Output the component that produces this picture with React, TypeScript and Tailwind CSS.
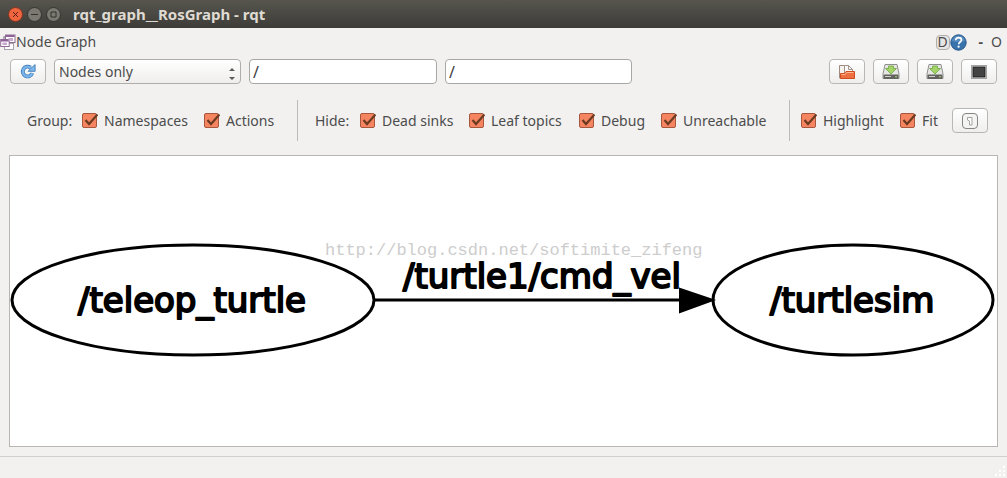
import type { ReactNode } from 'react';
import { useState } from 'react';

const toolButton =
  'flex h-[25px] w-9 shrink-0 items-center justify-center rounded border border-[#b9b7b4] bg-gradient-to-b from-white to-[#efeeed]';

const textInput =
  'h-[25px] min-w-0 rounded border border-[#a9a7a4] bg-white px-[3px] text-base text-[#3c3c3c] outline-none';

const RefreshIcon = () => (
  <svg className="size-4" viewBox="0 0 16 16" fill="none">
    <path d="M12.3 9.2A4.9 4.9 0 1 1 10.6 3.6" stroke="#3f7ab8" strokeWidth="3.8" />
    <path d="M8.2 7.3h6.9V.6l-2.4 2.1-1.6 1.4z" fill="#7db8ea" stroke="#3f7ab8" strokeWidth=".9" />
    <path d="M12.3 9.3A4.9 4.9 0 1 1 11 3.9" stroke="#79b5ea" strokeWidth="2.4" />
  </svg>
);

const FolderIcon = () => (
  <svg className="size-4" viewBox="0 0 16 16">
    <path d="M.5 1.500h5l1 1.500v11h-6z" fill="#f6f1ec" stroke="#a08b80" />
    <path d="M5.500 1.500h4l4 4v5h-8z" fill="#fbf9f7" stroke="#a3948b" />
    <path d="M9.500 1.500v4h4" fill="none" stroke="#a3948b" />
    <path d="M1.500 14.500v-5h4l1.500-2h8.500v7z" fill="#ee7040" stroke="#cf4c20" />
    <path d="M2.500 10.500h3.500l1.500-2h7" fill="none" stroke="#ffb896" />
  </svg>
);

const SaveIcon = () => (
  <svg className="h-4 w-[18px]" viewBox="0 0 18 16">
    <path d="M3 .5h12l2 9.500v4.500H1V10z" fill="#e6e6e4" stroke="#8f8f8f" />
    <rect x="1.500" y="10.500" width="15" height="4.500" rx="1" fill="#62625f" />
    <path d="M3 12.500h6" stroke="#cfcfcf" />
    <circle cx="14" cy="12.700" r=".8" fill="#b5e07f" />
    <path d="M6.500 2h5v2.500h3L9 10 3.500 4.500h3z" fill="#a4d468" stroke="#6fa843" strokeWidth=".8" />
  </svg>
);

const ScreenIcon = () => (
  <svg className="h-3.5 w-4" viewBox="0 0 16 14">
    <rect x=".5" y=".5" width="15" height="13" fill="#eee" stroke="#a3a3a3" />
    <rect x="2" y="2" width="12" height="10" fill="#434343" stroke="#222" />
  </svg>
);

const FitIcon = () => (
  <svg className="size-4" viewBox="0 0 16 16" fill="none">
    <rect x=".5" y=".5" width="15" height="15" rx="3.500" fill="#f4f4f3" stroke="#858585" />
    <path d="M5.500 4.500h4.500v7.500H7.500V8L5.500 7z" fill="#fff" stroke="#999" strokeWidth=".9" />
  </svg>
);

const NodeGraphIcon = () => (
  <svg className="size-4 shrink-0" viewBox="0 0 16 16">
    <path d="M4 8V3h4M12 8v5H9" fill="none" stroke="#9a949c" strokeWidth="1.500" />
    <g fill="#fff" stroke="#8d6c95">
      <rect x="4.500" y="9.500" width="9" height="6" stroke="#aaa3ad" />
      <rect x="5.500" y="1" width="9.500" height="7.500" />
      <rect x=".7" y="5.500" width="8.500" height="7" />
    </g>
    <path d="M6 2h8.500M1 6.500h8" stroke="#8f6399" strokeWidth="2" />
    <path d="M8.500 4h4.500v3H8.500zM2.500 8.500h4.500v2.500H2.500z" fill="#c9a9d0" />
  </svg>
);

const HelpIcon = () => (
  <svg className="size-[17px]" viewBox="0 0 17 17" fill="none">
    <circle cx="8.500" cy="8.500" r="7.700" fill="#3973ac" stroke="#245489" />
    <path d="M2 7a6.600 6.600 0 0 1 13 0Q8 9 2 7" fill="#6598c8" opacity=".6" />
    <path d="M5.700 6.200c0-3.500 5.800-3.200 5.800-.2 0 2-2.800 2-2.800 4.200" stroke="#fff" strokeWidth="1.700" />
    <circle cx="8.600" cy="12.700" r="1.100" fill="#fff" />
  </svg>
);

const windowButtons = [
  { name: 'Close', color: 'border-[#7d3520] bg-[#ee6540] text-[#5b1f0e]', path: 'M4 4l5 5M9 4l-5 5' },
  { name: 'Minimize', color: 'border-[#34332e] bg-[#7b7972] text-[#33322e]', path: 'M3 6.500h7' },
  { name: 'Maximize', color: 'border-[#34332e] bg-[#7b7972] text-[#33322e]', path: 'M4 4h5v5H4z' },
];

const TitleBar = () => (
  <header className="flex h-7 items-center gap-1 bg-gradient-to-b from-[#57554e] to-[#3d3c38] pl-2">
    {windowButtons.map(({ name, color, path }) => (
      <button
        key={name}
        aria-label={name}
        className={`flex size-[15px] items-center justify-center rounded-full border ${color}`}
      >
        <svg className="size-[13px] shrink-0" viewBox="0 0 13 13" fill="none" stroke="currentColor">
          <path d={path} />
        </svg>
      </button>
    ))}
    <h1 className="ml-2 text-[15px] font-bold text-[#dfdbd2]">rqt_graph__RosGraph - rqt</h1>
  </header>
);

const DockBar = () => (
  <div className="flex h-7 items-center">
    <NodeGraphIcon />
    <h2 className="text-sm">Node Graph</h2>
    <div className="ml-auto flex items-center text-sm">
      <button className="flex h-[15px] w-3.5 items-center justify-center rounded-sm border border-[#b0aeab] bg-[#e6e5e3]">
        D
      </button>
      <button aria-label="Help">
        <HelpIcon />
      </button>
      <button className="ml-3 font-bold">-</button>
      <button className="ml-2 w-4 text-left">O</button>
    </div>
  </div>
);

const Toolbar = () => {
  const [nodeFilter, setNodeFilter] = useState('/');
  const [topicFilter, setTopicFilter] = useState('/');

  return (
    <div className="flex items-center gap-2 px-2.5 pt-[3px]">
      <button aria-label="Refresh" className={toolButton}>
        <RefreshIcon />
      </button>
      <div className="grid w-[187px] items-center">
        <select
          aria-label="Graph type"
          className="col-start-1 row-start-1 h-[25px] appearance-none rounded border border-[#b0aeab] bg-gradient-to-b from-white to-[#efeeed] pr-5 pl-1 text-sm"
        >
          <option>Nodes only</option>
          <option>Nodes/Topics (active)</option>
          <option>Nodes/Topics (all)</option>
        </select>
        <svg
          className="pointer-events-none col-start-1 row-start-1 mt-1 mr-1.5 h-3 w-1.5 justify-self-end"
          viewBox="0 0 6 12"
          fill="#5a5a5a"
        >
          <path d="M0 3 3 0l3 3zM0 9l3 3 3-3z" />
        </svg>
      </div>
      <input
        aria-label="Node filter"
        className={`${textInput} w-[188px]`}
        value={nodeFilter}
        onChange={(e) => setNodeFilter(e.target.value)}
      />
      <input
        aria-label="Topic filter"
        className={`${textInput} w-[187px]`}
        value={topicFilter}
        onChange={(e) => setTopicFilter(e.target.value)}
      />
      <div className="ml-auto flex gap-2">
        <button aria-label="Load" className={toolButton}>
          <FolderIcon />
        </button>
        <button aria-label="Save as DOT" className={toolButton}>
          <SaveIcon />
        </button>
        <button aria-label="Save as SVG" className={toolButton}>
          <SaveIcon />
        </button>
        <button aria-label="Save as image" className={toolButton}>
          <ScreenIcon />
        </button>
      </div>
    </div>
  );
};

const CheckOption = ({ width, children }: { width: string; children: ReactNode }) => (
  <label className={`flex items-center gap-1.5 whitespace-nowrap ${width}`}>
    <span className="grid size-4 shrink-0">
      <input
        type="checkbox"
        defaultChecked
        className="peer col-start-1 row-start-1 size-[15px] appearance-none rounded-xs border border-[#a8573c] bg-white checked:bg-[#f58560]"
      />
      <svg
        className="pointer-events-none invisible col-start-1 row-start-1 size-4 peer-checked:visible"
        viewBox="0 0 16 16"
        fill="none"
      >
        <path d="M3.500 7 7 11 15.500 1.500" stroke="#6b3a20" strokeWidth="2.200" />
      </svg>
    </span>
    {children}
  </label>
);

const Divider = () => <div className="h-[41px] w-px shrink-0 bg-[#bdbbb8]" />;

const Options = () => (
  <div className="flex h-[71px] items-center pt-0.5 pl-[27px] text-sm">
    <span className="w-[55px] shrink-0">Group:</span>
    <CheckOption width="w-[122px]">Namespaces</CheckOption>
    <CheckOption width="w-[93px]">Actions</CheckOption>
    <Divider />
    <span className="ml-[17px] w-[45px] shrink-0">Hide:</span>
    <CheckOption width="w-[109px]">Dead sinks</CheckOption>
    <CheckOption width="w-[110px]">Leaf topics</CheckOption>
    <CheckOption width="w-[82px]">Debug</CheckOption>
    <CheckOption width="w-[128px]">Unreachable</CheckOption>
    <Divider />
    <span className="w-[11px] shrink-0" />
    <CheckOption width="w-[99px]">Highlight</CheckOption>
    <CheckOption width="w-[52px]">Fit</CheckOption>
    <button aria-label="Fit in view" className={toolButton}>
      <FitIcon />
    </button>
  </div>
);

const Graph = () => (
  <svg className="w-full" viewBox="0 0 987 290" role="img" aria-label="Node graph">
    <text
      x="315"
      y="99"
      fontSize="17"
      fill="#cdcdcd"
      className="font-['Liberation_Mono',monospace]"
    >
      http://blog.csdn.net/softimite_zifeng
    </text>
    <g fill="none" stroke="#000" strokeWidth="3">
      <ellipse cx="183" cy="144" rx="181" ry="55" />
      <ellipse cx="843" cy="144" rx="140" ry="55" />
      <path d="M364 144h306" />
    </g>
    <path d="M670 133v23l33-12z" stroke="#000" strokeWidth="2" />
    <g
      fontSize="34"
      stroke="#000"
      strokeWidth="2"
      strokeLinejoin="round"
      className="font-['DejaVu_Sans',sans-serif]"
    >
      <text x="68" y="156">/teleop_turtle</text>
      <text x="393" y="132">/turtle1/cmd_vel</text>
      <text x="760" y="156">/turtlesim</text>
    </g>
  </svg>
);

const App = () => {
  return (
    <div className="flex min-h-screen flex-col bg-[#f2f1f0] font-['Noto_Sans','Open_Sans',sans-serif] text-[#4c4c4c]">
      <TitleBar />
      <DockBar />
      <Toolbar />
      <Options />
      <main className="mx-[9px] border border-[#b8b6b3] bg-white">
        <Graph />
      </main>
      <footer className="mt-[9px] flex flex-1 items-end justify-end border-t border-[#d2d0ce]">
        <svg className="size-3" viewBox="0 0 12 12" fill="#fff">
          <path d="M8 0h2v2H8zM4 4h2v2H4zM8 4h2v2H8zM0 8h2v2H0zM4 8h2v2H4zM8 8h2v2H8z" />
        </svg>
      </footer>
    </div>
  );
};

export default App;
